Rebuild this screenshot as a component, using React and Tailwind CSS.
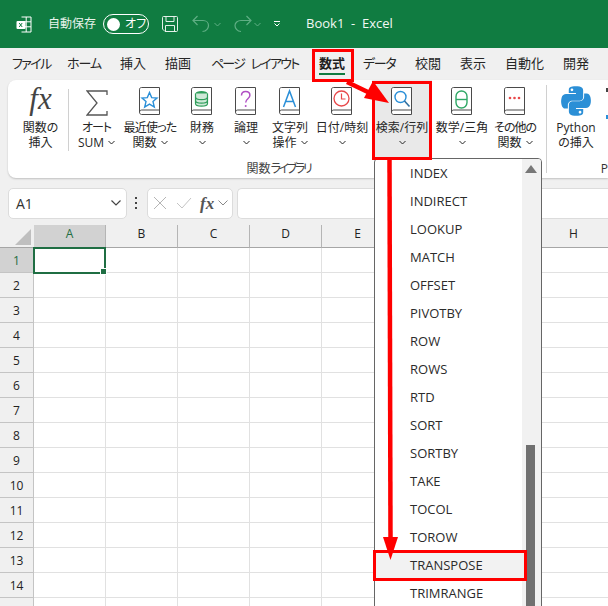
import React from "react";

const FONT = "[font-family:'Open_Sans','Noto_Sans_CJK_JP',sans-serif]";

function Chev({ className = "" }) {
  return (
    <svg width="7" height="5" viewBox="0 0 7 5" className={className} fill="none" stroke="currentColor" strokeWidth="1">
      <path d="M.5 1 3.500 4 6.500 1" />
    </svg>
  );
}

function Book({ children }) {
  return (
    <svg width="24" height="30" viewBox="0 0 24 30" fill="none">
      <path d="M3.500 1.500h18v27h-18c-1 0-2-1-2-2.200V3.200c0-1 1-1.700 2-1.700Z" fill="#fff" stroke="#4a4a4a" />
      <path d="M1.500 26.500c0-1.600 1-2.500 2.200-2.500h17.800" stroke="#4a4a4a" />
      {children}
    </svg>
  );
}

const colIcons = {
  star: <Book><path d="M11.500 6.500 13.700 11.600 19 12 15 15.600 16.300 21 11.500 18.100 6.700 21 8 15.600 4 12 9.300 11.600Z" stroke="#2a8fd8" strokeWidth="1.400" /></Book>,
  db: (
    <Book>
      <ellipse cx="11.500" cy="7.500" rx="6" ry="2.600" fill="#2f9e5b" />
      <path d="M5.500 7.500v10c0 1.500 2.700 2.600 6 2.600s6-1.100 6-2.600v-10" stroke="#2f9e5b" strokeWidth="1.200" fill="#cfe9d8" />
      <path d="M5.500 11c0 1.500 2.700 2.600 6 2.600s6-1.100 6-2.600M5.500 14.500c0 1.500 2.700 2.600 6 2.600s6-1.100 6-2.600" stroke="#2f9e5b" strokeWidth="1.200" />
    </Book>
  ),
  q: <Book><path d="M7.500 9.500c0-2.500 1.800-4 4.200-4s4.200 1.500 4.200 3.800c0 3.500-4.200 3.400-4.200 7.200" stroke="#b04fc4" strokeWidth="1.500" /><circle cx="11.700" cy="20" r="1" fill="#b04fc4" /></Book>,
  a: <Book><path d="M5.500 21 11.500 5l6 16M7.500 15.500h8" stroke="#2a8fd8" strokeWidth="1.500" /></Book>,
  clock: <Book><circle cx="11.500" cy="12.500" r="7.500" stroke="#e8484a" strokeWidth="1.300" /><path d="M11.500 7.500v5.500h4" stroke="#e8484a" strokeWidth="1.200" /></Book>,
  search: <Book><circle cx="10.500" cy="11" r="5.500" stroke="#2a8fd8" strokeWidth="1.400" /><path d="m14.500 15 5 5.500" stroke="#2f6f9f" strokeWidth="1.600" /></Book>,
  theta: <Book><rect x="6" y="5" width="11" height="17" rx="5.500" stroke="#2fa866" strokeWidth="1.400" /><path d="M6 13.500h11" stroke="#2fa866" strokeWidth="1.400" /></Book>,
  dots: <Book><circle cx="7" cy="12" r="1.300" fill="#e8484a" /><circle cx="11.500" cy="12" r="1.300" fill="#e8484a" /><circle cx="16" cy="12" r="1.300" fill="#e8484a" /></Book>,
};

function RibbonBtn({ w, icon, l1, l2, chevInline, active, tr = "" }) {
  return (
    <div className={`flex flex-col items-center shrink-0 ${w} h-[80px] ${active ? "bg-[#e9e9e9]" : ""}`}>
      <div className="h-[36px] flex items-end justify-center">{icon}</div>
      <div className={`mt-[4px] text-[12px] leading-[15px] text-[#262626] whitespace-nowrap [font-feature-settings:'palt'] ${tr}`}>{l1}</div>
      <div className="text-[12px] leading-[15px] text-[#262626] whitespace-nowrap flex items-center gap-[4px] h-[15px] [font-feature-settings:'palt']">
        {l2}
        {chevInline && <Chev />}
      </div>
    </div>
  );
}

const tabs = [
  { t: "ファイル", w: "w-[36px]", tr: "tracking-[-1.600px]" },
  { t: "ホーム", w: "w-[34px]", tr: "tracking-[-1px]" },
  { t: "挿入", w: "w-[26px]", tr: "" },
  { t: "描画", w: "w-[27px]", tr: "" },
  { t: "ページ レイアウト", w: "w-[89px]", tr: "tracking-[-1.800px] [word-spacing:5px]" },
  { t: "数式", w: "w-[25px]", tr: "" },
  { t: "データ", w: "w-[33px]", tr: "tracking-[-1.300px]" },
  { t: "校閲", w: "w-[26px]", tr: "" },
  { t: "表示", w: "w-[26px]", tr: "" },
  { t: "自動化", w: "w-[39px]", tr: "" },
  { t: "開発", w: "w-[26px]", tr: "" },
];
const cols = ["A", "B", "C", "D", "E", "F", "G", "H"];
const rows = Array.from({ length: 15 }, (_, i) => i + 1);
const items = ["INDEX", "INDIRECT", "LOOKUP", "MATCH", "OFFSET", "PIVOTBY", "ROW", "ROWS", "RTD", "SORT", "SORTBY", "TAKE", "TOCOL", "TOROW", "TRANSPOSE", "TRIMRANGE"];
const PY = "M54.900 1c-4.600 0-9 .4-12.800 1.100C30.800 4.100 28.800 8.300 28.800 16v10.200h26.600v3.400H18.800c-7.700 0-14.500 4.600-16.600 13.500-2.400 10.100-2.500 16.400 0 27 1.900 7.900 6.400 13.500 14.100 13.500h9.100V71.500c0-8.800 7.600-16.500 16.600-16.500h26.600c7.400 0 13.300-6.100 13.300-13.500V16c0-7.200-6.100-12.600-13.300-13.800C64.100 1.400 59.500 1 54.900 1ZM40.500 9.200c2.800 0 5 2.300 5 5.100s-2.200 5-5 5-5-2.300-5-5 2.200-5.100 5-5.100Z";

export default function App() {
  return (
    <div className={`relative w-[608px] h-[606px] overflow-hidden bg-[#f0f0f0] ${FONT}`}>
      {/* title bar */}
      <div className="h-[48px] bg-[#107c41] flex items-center text-white pl-[16px]">
        <svg width="16" height="17" viewBox="0 0 16 17" fill="none" className="shrink-0">
          <path d="M5.500 1h9.500v15H5.500M10.200 1v15M5.500 5.800H15M5.500 10.800H15" stroke="#fff" />
          <rect x="0.500" y="5" width="9" height="8" rx="1" fill="#fff" />
          <path d="M3.200 7l3 4M6.200 7l-3 4" stroke="#107c41" />
        </svg>
        <span className="ml-[16px] text-[12px] text-[#e8f3ec] [font-feature-settings:'palt']">自動保存</span>
        <div className="ml-[7px] w-[46px] h-[20px] rounded-full border border-white flex items-center pl-[3px]">
          <span className="w-[13px] h-[13px] rounded-full bg-white" />
          <span className="ml-[5px] text-[12px] leading-none [font-feature-settings:'palt']">オフ</span>
        </div>
        <svg width="16" height="16" viewBox="0 0 16 16" fill="none" stroke="#e4f0e9" className="ml-[13px]">
          <path d="M.5 1.500a1 1 0 0 1 1-1h13a1 1 0 0 1 1 1v13a1 1 0 0 1-1 1H3l-2.500-2.500ZM4 .5v5h8v-5M3.500 15.500v-6h9v6" />
        </svg>
        <svg width="20" height="18" viewBox="0 0 20 18" fill="none" stroke="#5fae84" strokeWidth="1.200" className="ml-[14px]">
          <path d="M5.500 1 1 5.500l4.500 4.500M1 5.500h10c3.500 0 5.500 2.500 5.500 5s-2 6-6 6" />
        </svg>
        <Chev className="ml-[2px] text-[#5fae84]" />
        <svg width="20" height="18" viewBox="0 0 20 18" fill="none" stroke="#5fae84" strokeWidth="1.200" className="ml-[11px]">
          <path d="M14.500 1 19 5.500 14.500 10M19 5.500H9C5.500 5.500 3 8 3 10.500s2 6 6 6" />
        </svg>
        <Chev className="ml-[2px] text-[#5fae84]" />
        <svg width="6" height="6" viewBox="0 0 6 6" fill="none" stroke="#fff" className="ml-[13px]">
          <path d="M0 .5h6M.5 2.500l2.500 2.500 2.500-2.500" />
        </svg>
        <span className="ml-[26px] text-[13px] whitespace-pre text-[#f2f8f4]">Book1  -  Excel</span>
      </div>

      {/* tabs */}
      <div className="h-[32px] flex items-center pl-[12px] gap-[19px] text-[13px] text-[#262626] whitespace-nowrap [font-feature-settings:'palt']">
        {tabs.map(({ t, w, tr }) => (
          <span key={t} className={`relative shrink-0 ${w} ${tr} ${t === "数式" ? "font-bold text-[#1f1f1f]" : ""}`}>
            {t}
            {t === "数式" && <span className="absolute left-0 w-[26px] top-[19px] h-[2px] bg-[#107c41]" />}
          </span>
        ))}
      </div>

      {/* ribbon */}
      <div className="ml-[8px] h-[98px] bg-white rounded-l-[8px] shadow-[0_1px_2px_rgba(0,0,0,0.2)]">
        <div className="flex h-[80px] pl-[5px]">
          <RibbonBtn
            w="w-[55px]"
            icon={<span className="[font-family:'Liberation_Serif',serif] italic text-[31px] leading-[34px] text-[#444]">fx</span>}
            l1="関数の"
            l2="挿入"
          />
          <div className="w-px h-[62px] mt-[9px] bg-[#d0d0d0] shrink-0" />
          <RibbonBtn
            w="w-[55px]"
            icon={
              <svg width="22" height="26" viewBox="0 0 22 26" fill="none" stroke="#555" strokeWidth="1.300">
                <path d="M21 5V1H1l10 12L1 25h20v-4" />
              </svg>
            }
            l1="オート"
            l2="SUM"
            chevInline
            tr="tracking-[-1px]"
          />
          <RibbonBtn w="w-[52px]" icon={colIcons.star} l1="最近使った" l2="関数" chevInline tr="tracking-[-0.800px]" />
          <div className="w-[4px] shrink-0" />
          <RibbonBtn w="w-[44px]" icon={colIcons.db} l1="財務" l2={<Chev />} />
          <RibbonBtn w="w-[44px]" icon={colIcons.q} l1="論理" l2={<Chev />} />
          <RibbonBtn w="w-[44px]" icon={colIcons.a} l1="文字列" l2="操作" chevInline />
          <RibbonBtn w="w-[60px]" icon={colIcons.clock} l1="日付/時刻" l2={<Chev />} />
          <RibbonBtn w="w-[60px]" icon={colIcons.search} l1="検索/行列" l2={<Chev />} active />
          <RibbonBtn w="w-[60px]" icon={colIcons.theta} l1="数学/三角" l2={<Chev />} />
          <RibbonBtn w="w-[46px]" icon={colIcons.dots} l1="その他の" l2="関数" chevInline tr="tracking-[-1px]" />
          <div className="w-px h-[88px] mt-[5px] ml-[8px] bg-[#d0d0d0] shrink-0" />
          <RibbonBtn
            w="w-[58px]"
            icon={
              <svg width="30" height="30" viewBox="0 0 111 111" fill="#2b8fd6">
                <path fillRule="evenodd" d={PY} />
                <path fillRule="evenodd" transform="rotate(180 55.500 55.500)" d={PY} />
              </svg>
            }
            l1="Python"
            l2="の挿入"
          />
          <div className="flex flex-col shrink-0 pl-[1px]">
            <span className="mt-[8px] w-[2px] h-[4px] bg-[#444]" />
            <span className="mt-[23px] w-[2px] h-[4px] bg-[#2a8fd8]" />
          </div>
        </div>
        <div className="flex h-[18px] text-[12px] leading-[18px] text-[#444]">
          <div className="w-[544px] text-center [font-feature-settings:'palt']">関数<span className="tracking-[-2.400px]">ライブラリ</span></div>
          <div className="ml-[52px] text-[#333]">P</div>
        </div>
      </div>

      {/* formula bar */}
      <div className="h-[47px] flex items-center pl-[8px] pt-[3px]">
        <div className="w-[119px] h-[31px] bg-white border border-[#dcdcdc] rounded-[5px] flex items-center justify-between pl-[7px] pr-[5px] text-[14px] text-[#333]">
          A1
          <svg width="10" height="6" viewBox="0 0 10 6" fill="none" stroke="#444" strokeWidth="1.200"><path d="M.5 .5 5 5 9.500 .5" /></svg>
        </div>
        <svg width="4" height="12" viewBox="0 0 4 12" fill="#444" className="ml-[7px]">
          <rect x="1" y="0" width="2" height="2" />
          <rect x="1" y="5" width="2" height="2" />
          <rect x="1" y="10" width="2" height="2" />
        </svg>
        <div className="ml-[9px] w-[86px] h-[31px] bg-white border border-[#dcdcdc] rounded-[5px] flex items-center pl-[5px]">
          <svg width="14" height="14" viewBox="0 0 14 14" fill="none" stroke="#b5b5b5"><path d="M1 1l12 12M13 1 1 13" /></svg>
          <svg width="16" height="12" viewBox="0 0 16 12" fill="none" stroke="#c4c4c4" className="ml-[9px]"><path d="M1 6l5 5L15 1" /></svg>
          <span className="ml-[8px] [font-family:'Liberation_Serif',serif] italic font-bold text-[17px] leading-none text-[#555]">fx</span>
          <svg width="10" height="6" viewBox="0 0 10 6" fill="none" stroke="#888" className="ml-[4px]"><path d="M.5 .5 5 5 9.500 .5" /></svg>
        </div>
        <div className="ml-[4px] flex-1 h-[31px] bg-white border border-[#dcdcdc] border-r-0 rounded-l-[5px]" />
      </div>

      {/* sheet */}
      <div className="grid grid-cols-[34px_repeat(8,72px)] grid-rows-[23px_repeat(15,25px)] text-[12px] bg-white">
        <div className="bg-[#f0f0f0] border-b border-[#a6a6a6] flex items-end justify-end pr-[3px] pb-[2px]">
          <svg width="16" height="16" viewBox="0 0 16 16"><path d="M16 0v16H0Z" fill="#bfbfbf" /></svg>
        </div>
        {cols.map((c, i) => (
          <div
            key={c}
            className={`flex items-center justify-center border-b border-r border-b-[#a6a6a6] border-r-[#b5b5b5] pb-[4px] ${i === 0 ? "bg-[#d2d2d2] text-[#1f6e43]" : "bg-[#f0f0f0] text-[#222]"}`}
          >
            {c}
          </div>
        ))}
        {rows.map((r) => (
          <React.Fragment key={r}>
            <div className={`flex items-center justify-center pt-[2px] border-b border-r border-[#c4c4c4] ${r === 1 ? "bg-[#d2d2d2] text-[#1f6e43]" : "bg-[#f0f0f0] text-[#222]"}`}>{r < 15 ? r : ""}</div>
            {cols.map((c) => (
              <div key={c} className="border-b border-r border-[#e1e1e1] relative">
                {r === 1 && c === "A" && (
                  <div className="absolute -left-[1px] -top-[1px] w-[73px] h-[27px] border-2 border-[#1f6e43] z-10">
                    <span className="absolute -right-[3px] -bottom-[3px] w-[5px] h-[5px] bg-[#1f6e43] border border-white box-content" />
                  </div>
                )}
              </div>
            ))}
          </React.Fragment>
        ))}
      </div>

      {/* dropdown menu */}
      <div className="absolute left-[374px] top-[158px] w-[168px] h-[460px] bg-white border border-[#666] rounded-t-[4px] flex overflow-hidden [font-family:'Open_Sans',sans-serif]">
        <div className="w-[147px]">
          {items.map((it) => (
            <div key={it} className={`h-[28px] leading-[28px] pl-[35px] text-[13px] text-[#2b2b2b] ${it === "TRANSPOSE" ? "bg-[#f2f2f2]" : ""}`}>{it}</div>
          ))}
        </div>
        <div className="flex-1 bg-[#f1f1f1] relative">
          <svg width="12" height="8" viewBox="0 0 12 8" className="absolute left-[3px] top-[6px]"><path d="M6 0l6 8H0Z" fill="#777" /></svg>
          <div className="absolute left-[4px] top-[286px] bottom-0 w-[9px] bg-[#707070]" />
        </div>
      </div>

      {/* red annotations */}
      <div className="absolute left-[312px] top-[49px] w-[42px] h-[33px] border-[3px] border-[#ff0000]" />
      <div className="absolute left-[372px] top-[81px] w-[60px] h-[79px] border-[3px] border-[#ff0000]" />
      <div className="absolute left-[373px] top-[550px] w-[154px] h-[31px] border-[3px] border-[#ff0000]" />
      <svg width="608" height="606" viewBox="0 0 608 606" className="absolute inset-0 pointer-events-none">
        <path d="M389.500 160 390.500 540" stroke="#ff0000" strokeWidth="4.500" fill="none" />
        <path d="M383 537h15l-7.500 23Z" fill="#ff0000" />
        <path d="M347 82 372 94" stroke="#ff0000" strokeWidth="4.500" fill="none" />
        <path d="M389 103 364 98 373 81Z" fill="#ff0000" />
      </svg>
    </div>
  );
}
